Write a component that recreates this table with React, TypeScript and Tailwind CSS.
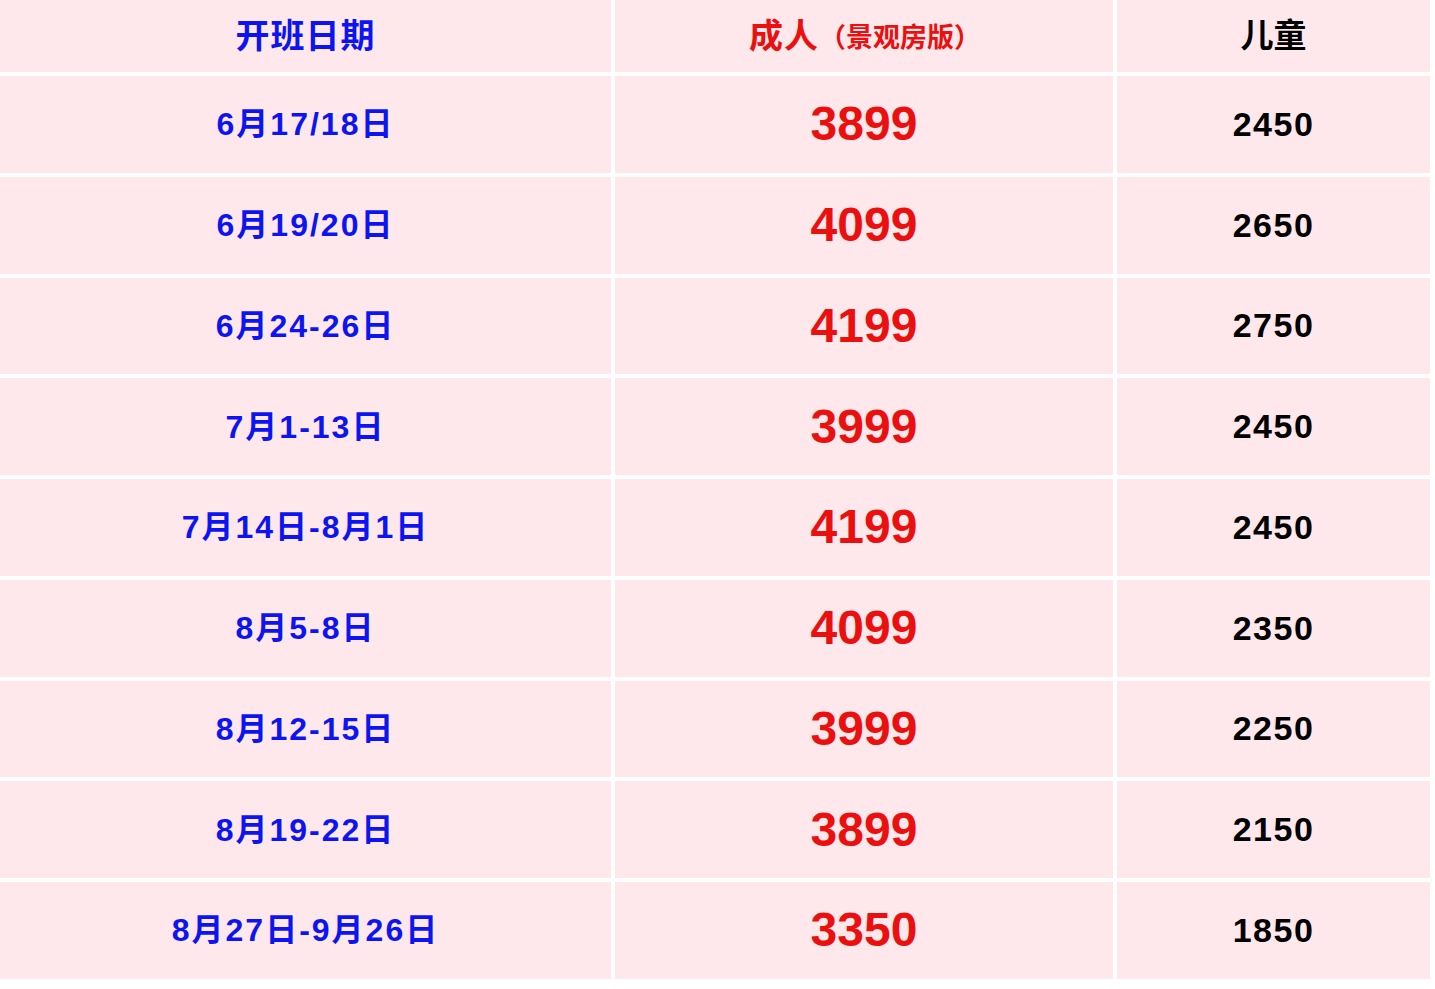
const rows = [
  { date: "6月17/18日", adult: "3899", child: "2450" },
  { date: "6月19/20日", adult: "4099", child: "2650" },
  { date: "6月24-26日", adult: "4199", child: "2750" },
  { date: "7月1-13日", adult: "3999", child: "2450" },
  { date: "7月14日-8月1日", adult: "4199", child: "2450" },
  { date: "8月5-8日", adult: "4099", child: "2350" },
  { date: "8月12-15日", adult: "3999", child: "2250" },
  { date: "8月19-22日", adult: "3899", child: "2150" },
  { date: "8月27日-9月26日", adult: "3350", child: "1850" },
];

const font = "font-['Liberation_Sans','Noto_Sans_CJK_SC',sans-serif] font-bold";

export default function App() {
  return (
    <div className="w-[1435px] h-[989px] bg-white overflow-hidden">
      <div className={`grid grid-cols-[611px_498px_313px] grid-rows-[72px] auto-rows-[96.75px] gap-[4px] ${font}`}>
        <div className="bg-[#ffe8eb] flex items-center justify-center text-[#0c14f2] text-[34px] tracking-[1px]">
          开班日期
        </div>
        <div className="bg-[#ffe8eb] flex items-center justify-center text-[#ea1010] pl-[2px]">
          <span className="text-[34px] tracking-[1px]">成人</span>
          <span className="text-[27px] mt-[4px]">（景观房版）</span>
        </div>
        <div className="bg-[#ffe8eb] flex items-center justify-center text-black text-[33px]">
          儿童
        </div>
        {rows.map((r) => (
          <>
            <div key={r.date + "d"} className="bg-[#ffe8eb] flex items-center justify-center text-[#0c14f2] text-[32px] tracking-[2px]">
              {r.date}
            </div>
            <div key={r.date + "a"} className="bg-[#ffe8eb] flex items-center justify-center text-[#ea1010] text-[48px]">
              {r.adult}
            </div>
            <div key={r.date + "c"} className="bg-[#ffe8eb] flex items-center justify-center text-black text-[34px] tracking-[1.5px]">
              {r.child}
            </div>
          </>
        ))}
      </div>
    </div>
  );
}
